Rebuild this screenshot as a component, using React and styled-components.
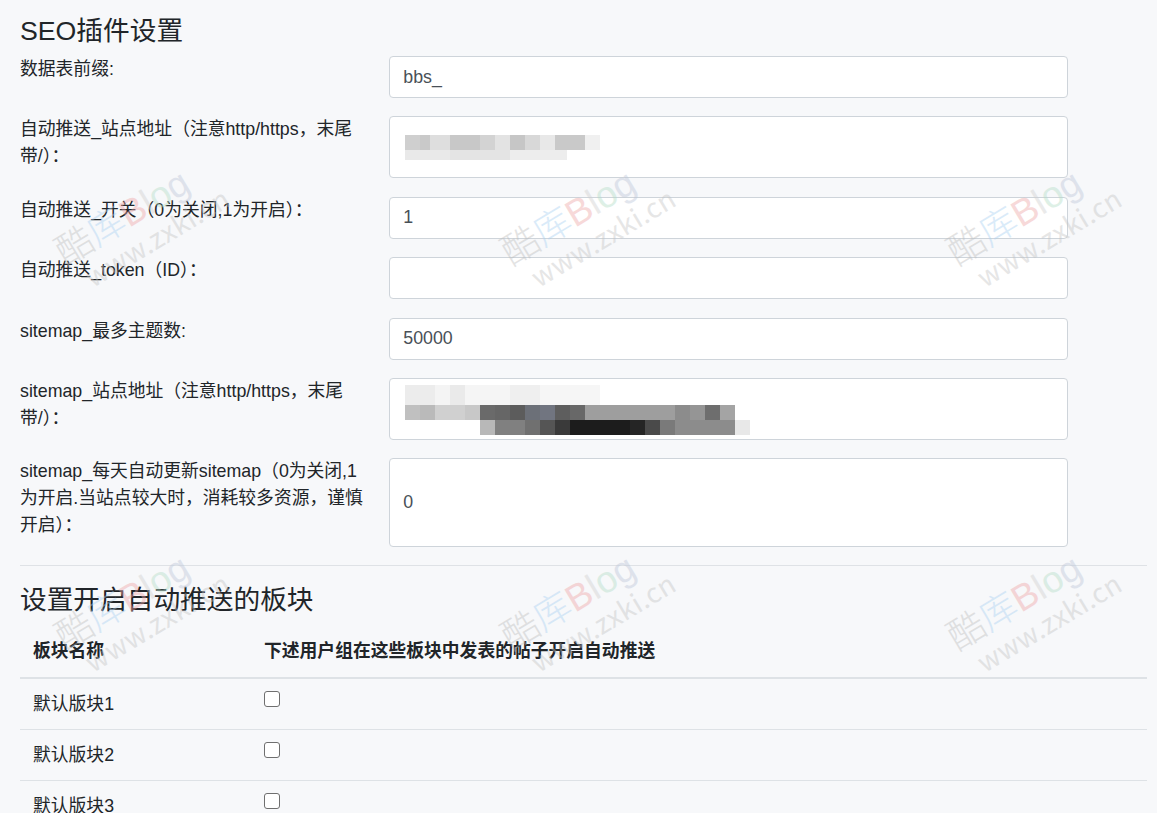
import React from "react";
import styled, { createGlobalStyle } from "styled-components";

const GlobalStyle = createGlobalStyle`
  html, body { margin: 0; padding: 0; background: #f7f8fa; }
  body {
    font-family: "Liberation Sans", "Noto Sans CJK SC", sans-serif;
    font-size: 17.8px;
    line-height: 1.5;
    color: #212529;
  }
  * { box-sizing: border-box; }
`;

const Page = styled.div`
  position: relative;
  min-height: 813px;
  padding: 15px 10px 0 20px;
  overflow: hidden;
`;

const Heading = styled.h4`
  margin: 0 0 ${(p) => p.$mb || 9}px;
  font-size: 26.7px;
  font-weight: 400;
  line-height: 1.2;
  color: #212529;
`;

const Form = styled.div`
  display: flex;
  flex-direction: column;
  gap: 18.3px;
`;

const Row = styled.div`
  display: grid;
  grid-template-columns: 369px 679px;
  align-items: stretch;
`;

const Label = styled.label`
  display: block;
  width: 346px;
  margin-bottom: 8.7px;
  line-height: 26.7px;
`;

const FieldWrap = styled.div`
  position: relative;
  display: flex;
  min-height: 42px;
`;

const Input = styled.input`
  flex: 1;
  width: 100%;
  margin: 0;
  padding: 6.7px 13.3px;
  font: inherit;
  font-size: 17.8px;
  color: #495057;
  background: #fff;
  border: 1px solid #ced4da;
  border-radius: 4px;
  outline: none;
`;

const MosaicSvg = styled.svg`
  position: absolute;
  left: 0;
  top: 0;
  pointer-events: none;
`;

const Divider = styled.hr`
  margin: 17.5px 0 18px;
  border: 0;
  border-top: 1px solid #dfe2e6;
  height: 0;
`;

const Table = styled.table`
  width: 100%;
  border-collapse: collapse;
`;

const Th = styled.th`
  text-align: left;
  font-weight: 700;
  padding: 11.8px 13px;
  line-height: 26.7px;
  border-bottom: 2px solid #dee2e6;
  vertical-align: bottom;
  width: ${(p) => p.$w || "auto"};
`;

const Td = styled.td`
  padding: 11.8px 13px 11.6px;
  line-height: 26.7px;
  border-bottom: 1px solid #dee2e6;
  vertical-align: top;
`;

const Check = styled.input.attrs({ type: "checkbox" })`
  appearance: none;
  -webkit-appearance: none;
  display: block;
  width: 16px;
  height: 16px;
  margin: 0;
  background: #fff;
  border: 1.5px solid #6f6f6f;
  border-radius: 3px;
`;

const WatermarkLayer = styled.div`
  position: absolute;
  inset: 0;
  pointer-events: none;
  z-index: 5;
`;

const Mark = styled.div`
  position: absolute;
  transform: rotate(-31deg);
  transform-origin: 0 32px;
  font-family: "Noto Sans CJK SC", "Liberation Sans", sans-serif;
  white-space: nowrap;
  opacity: 0.42;
`;

const MarkTop = styled.div`
  font-size: 37px;
  line-height: 37px;
  font-weight: 300;
  font-family: "Liberation Sans", "Noto Sans CJK SC", sans-serif;
`;

const MarkBottom = styled.div`
  font-size: 27px;
  line-height: 27px;
  margin: 2px 0 0 12px;
  color: #c4c4c4;
  letter-spacing: 0.5px;
`;

const Glyph = styled.span`
  color: ${(p) => p.$c};
`;

const mosaicA = [
  [16, 19, 15, 15, "#cfcfcf"],
  [31, 19, 10, 15, "#c9c9c9"],
  [41, 19, 20, 15, "#dedede"],
  [61, 19, 30, 15, "#c8c8c8"],
  [91, 19, 15, 15, "#d3d3d3"],
  [106, 19, 15, 15, "#e3e3e3"],
  [121, 19, 15, 15, "#c6c6c6"],
  [136, 19, 15, 15, "#d8d8d8"],
  [151, 19, 15, 15, "#e8e8e8"],
  [166, 19, 30, 15, "#c9c9c9"],
  [196, 19, 15, 15, "#f0f0f0"],
  [16, 34, 45, 10, "#e9e9e9"],
  [61, 34, 60, 10, "#e4e4e4"],
  [121, 34, 57, 10, "#ededed"],
];

const mosaicB = [
  [16, 7, 30, 20, "#ececec"],
  [46, 7, 15, 20, "#f4f4f4"],
  [61, 7, 15, 20, "#eaeaea"],
  [76, 7, 45, 20, "#f5f5f5"],
  [121, 7, 30, 20, "#efefef"],
  [151, 7, 60, 20, "#f6f6f6"],
  [16, 27, 15, 15, "#c0c0c0"],
  [31, 27, 15, 15, "#bababa"],
  [46, 27, 30, 15, "#d0d0d0"],
  [76, 27, 15, 15, "#c8c8c8"],
  [91, 27, 15, 15, "#6a6a6a"],
  [106, 27, 15, 15, "#666666"],
  [121, 27, 15, 15, "#5c5c5c"],
  [136, 27, 15, 15, "#6c7078"],
  [151, 27, 15, 15, "#717580"],
  [166, 27, 15, 15, "#5e5e5e"],
  [181, 27, 15, 15, "#686868"],
  [196, 27, 90, 15, "#9e9e9e"],
  [286, 27, 15, 15, "#8c8c8c"],
  [301, 27, 15, 15, "#959595"],
  [316, 27, 15, 15, "#6e6e6e"],
  [331, 27, 15, 15, "#a4a4a4"],
  [91, 42, 15, 15, "#b8b8b8"],
  [106, 42, 30, 15, "#808080"],
  [136, 42, 15, 15, "#707070"],
  [151, 42, 15, 15, "#555555"],
  [166, 42, 15, 15, "#3a3a3a"],
  [181, 42, 60, 15, "#1c1c1c"],
  [241, 42, 15, 15, "#252525"],
  [256, 42, 15, 15, "#4a4a4a"],
  [271, 42, 15, 15, "#7a7a7a"],
  [286, 42, 60, 15, "#8c8c8c"],
  [346, 42, 15, 15, "#e8e8e8"],
];

function Mosaic({ cells }) {
  return (
    <MosaicSvg width="400" height="62" viewBox="0 0 400 62">
      {cells.map(([x, y, w, h, c], i) => (
        <rect key={i} x={x} y={y} width={w} height={h} fill={c} />
      ))}
    </MosaicSvg>
  );
}

const fields = [
  { label: "数据表前缀:", value: "bbs_" },
  { label: "自动推送_站点地址（注意http/https，末尾带/）：", value: "", mosaic: mosaicA },
  { label: "自动推送_开关（0为关闭,1为开启）：", value: "1" },
  { label: "自动推送_token（ID）：", value: "" },
  { label: "sitemap_最多主题数:", value: "50000" },
  { label: "sitemap_站点地址（注意http/https，末尾带/）：", value: "", mosaic: mosaicB },
  {
    label: "sitemap_每天自动更新sitemap（0为关闭,1为开启.当站点较大时，消耗较多资源，谨慎开启）：",
    value: "0",
  },
];

const boards = ["默认版块1", "默认版块2", "默认版块3"];

const marks = [
  [66, 235],
  [512, 235],
  [958, 235],
  [66, 620],
  [512, 620],
  [958, 620],
];

function Watermark({ x, y }) {
  return (
    <Mark style={{ left: x, top: y }}>
      <MarkTop>
        <Glyph $c="#bdbdbd">酷</Glyph>
        <Glyph $c="#a9d0f2">库</Glyph>
        <Glyph $c="#eea5a5">B</Glyph>
        <Glyph $c="#cfcfcf">l</Glyph>
        <Glyph $c="#b3dcc6">o</Glyph>
        <Glyph $c="#bcc6d8">g</Glyph>
      </MarkTop>
      <MarkBottom>www.zxki.cn</MarkBottom>
    </Mark>
  );
}

export default function App() {
  return (
    <>
      <GlobalStyle />
      <Page>
        <Heading>SEO插件设置</Heading>
        <Form>
          {fields.map((f, i) => (
            <Row key={i}>
              <Label>{f.label}</Label>
              <FieldWrap>
                <Input defaultValue={f.value} />
                {f.mosaic && <Mosaic cells={f.mosaic} />}
              </FieldWrap>
            </Row>
          ))}
        </Form>
        <Divider />
        <Heading $mb={11}>设置开启自动推送的板块</Heading>
        <Table>
          <thead>
            <tr>
              <Th $w="231px">板块名称</Th>
              <Th>下述用户组在这些板块中发表的帖子开启自动推送</Th>
            </tr>
          </thead>
          <tbody>
            {boards.map((b) => (
              <tr key={b}>
                <Td>{b}</Td>
                <Td>
                  <Check />
                </Td>
              </tr>
            ))}
          </tbody>
        </Table>
        <WatermarkLayer>
          {marks.map(([x, y], i) => (
            <Watermark key={i} x={x} y={y} />
          ))}
        </WatermarkLayer>
      </Page>
    </>
  );
}
